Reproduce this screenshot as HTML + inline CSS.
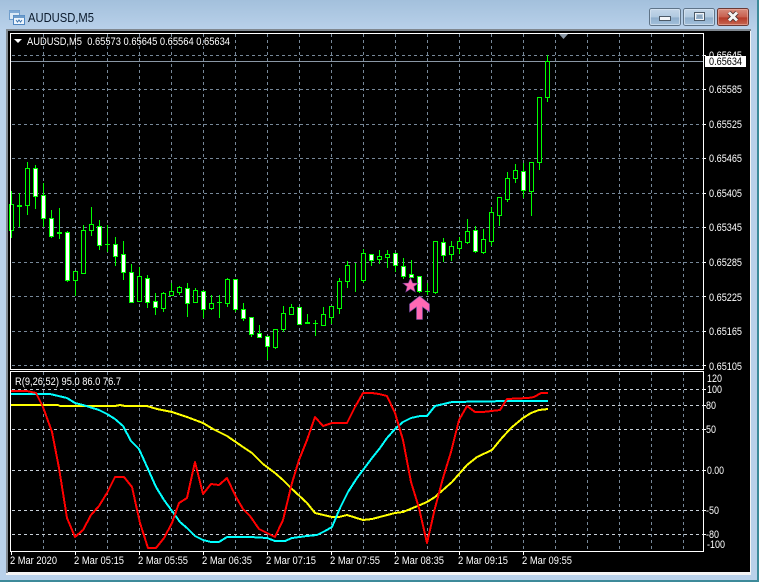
<!DOCTYPE html>
<html><head><meta charset="utf-8"><style>
html,body{margin:0;padding:0;background:#fff;width:761px;height:582px;overflow:hidden}
svg{display:block}
text{font-family:"Liberation Sans",sans-serif;font-size:11px;fill:#fff}
</style></head><body>
<svg width="761" height="582" viewBox="0 0 761 582" xmlns="http://www.w3.org/2000/svg">
<defs>
<linearGradient id="w" x1="0" y1="0" x2="0" y2="1"><stop offset="0" stop-color="#a3c0dc"/><stop offset="1" stop-color="#b9d1ea"/></linearGradient>
<linearGradient id="b" x1="0" y1="0" x2="0" y2="1"><stop offset="0" stop-color="#c5d8ea"/><stop offset=".5" stop-color="#b0c9e0"/><stop offset=".55" stop-color="#8fafcc"/><stop offset="1" stop-color="#a5c2dc"/></linearGradient>
<linearGradient id="c" x1="0" y1="0" x2="0" y2="1"><stop offset="0" stop-color="#d88f80"/><stop offset=".5" stop-color="#c8604f"/><stop offset=".55" stop-color="#b53a28"/><stop offset="1" stop-color="#c86a55"/></linearGradient>
</defs>
<!-- window -->
<rect x="0" y="0" width="759" height="582" fill="#b9d1ea"/>
<rect x="0" y="0" width="759" height="30" fill="url(#w)"/>
<rect x="757" y="0" width="2" height="582" fill="#3d8a9a"/>
<rect x="0" y="580" width="759" height="2" fill="#3d8a9a"/>
<rect x="6" y="29" width="745" height="546" fill="#f4f4f4"/>
<rect x="6" y="29" width="745" height="2" fill="#808890"/>
<rect x="6" y="29" width="2" height="544" fill="#808890"/>
<rect x="8" y="31" width="742" height="541" fill="#000"/>
<!-- icon -->
<rect x="9.5" y="10.5" width="10" height="9" fill="#dbe9f6" stroke="#6d9ccb"/>
<rect x="9.5" y="10.5" width="10" height="2.5" fill="#7fa9d4"/>
<rect x="13.5" y="15.5" width="11" height="9" fill="#eef5fc" stroke="#4f86c0"/>
<rect x="13.5" y="15.5" width="11" height="2.5" fill="#6d9ccb"/>
<path d="M16 20l1.5 2 1.5-2 1.5 2 1.5-2" fill="none" stroke="#3f76b0"/>
<text x="28" y="22" textLength="66" lengthAdjust="spacingAndGlyphs" style="font-size:13px;fill:#0b1a2c">AUDUSD,M5</text>
<!-- buttons -->
<rect x="649.5" y="8.5" width="31" height="17" rx="2" fill="url(#b)" stroke="#5f7488"/>
<rect x="650.5" y="9.5" width="29" height="15" rx="1" fill="none" stroke="#d8e6f2" stroke-opacity=".7"/>
<rect x="659.5" y="16.5" width="11" height="4" fill="#f2f5f8" stroke="#4c5a68"/>
<rect x="683.5" y="8.5" width="31" height="17" rx="2" fill="url(#b)" stroke="#5f7488"/>
<rect x="684.5" y="9.5" width="29" height="15" rx="1" fill="none" stroke="#d8e6f2" stroke-opacity=".7"/>
<rect x="694.5" y="12.5" width="10" height="8" fill="none" stroke="#4c5a68"/>
<rect x="695.5" y="13.5" width="8" height="6" fill="none" stroke="#f2f5f8"/>
<rect x="697" y="15" width="5" height="3" fill="#8fa7bd"/>
<rect x="717.5" y="8.5" width="31" height="17" rx="2" fill="url(#c)" stroke="#6a3a36"/>
<rect x="718.5" y="9.5" width="29" height="15" rx="1" fill="none" stroke="#eeb4a8" stroke-opacity=".6"/>
<path d="M729 12.5l8 8M737 12.5l-8 8" stroke="#4a3030" stroke-width="4.6"/>
<path d="M729 12.5l8 8M737 12.5l-8 8" stroke="#f4f4f4" stroke-width="3"/>
<!-- grid -->
<g stroke="#778899" fill="none" stroke-dasharray="3 3" shape-rendering="crispEdges">
<path d="M43.5 34V369M75.5 34V369M107.5 34V369M139.5 34V369M171.5 34V369M203.5 34V369M235.5 34V369M267.5 34V369M299.5 34V369M331.5 34V369M363.5 34V369M395.5 34V369M427.5 34V369M459.5 34V369M491.5 34V369M523.5 34V369M555.5 34V369M587.5 34V369M619.5 34V369M651.5 34V369M683.5 34V369"/>
<path d="M12 55.5H703M12 89.5H703M12 124.5H703M12 158.5H703M12 193.5H703M12 227.5H703M12 262.5H703M12 296.5H703M12 331.5H703M12 365.5H703"/>
<path d="M43.5 372V551M75.5 372V551M107.5 372V551M139.5 372V551M171.5 372V551M203.5 372V551M235.5 372V551M267.5 372V551M299.5 372V551M331.5 372V551M363.5 372V551M395.5 372V551M427.5 372V551M459.5 372V551M491.5 372V551M523.5 372V551M555.5 372V551M587.5 372V551M619.5 372V551M651.5 372V551M683.5 372V551"/>
</g>
<g stroke="#c8d0d8" fill="none" stroke-dasharray="3 3" shape-rendering="crispEdges">
<path d="M12 389.5H703M12 405.5H703M12 429.5H703M12 470.5H703M12 510.5H703M12 534.5H703"/>
</g>
<!-- price line -->
<path d="M11 61.5H703" stroke="#8a97a5" shape-rendering="crispEdges"/>
<!-- wicks -->
<path shape-rendering="crispEdges" fill="none" stroke="#0f0" d="M11.5 191V238M19.5 193V227M27.5 162V215M35.5 165V209M43.5 183V227M51.5 210V238M59.5 208V239M67.5 231V282M75.5 271V296M83.5 225V274M91.5 207V236M99.5 220V250M107.5 225V252M115.5 237V266M123.5 241V280M131.5 264V303M139.5 267V301M147.5 275V308M155.5 293V315M163.5 292V312M171.5 283V296M179.5 286V295M187.5 283V317M195.5 288V302M203.5 290V318M211.5 295V310M219.5 295V318M227.5 278V307M235.5 279V312M243.5 303V321M251.5 317V337M259.5 325V338M267.5 336V360M275.5 329V349M283.5 306V332M291.5 304V314M299.5 307V325M307.5 314V324M315.5 320V336M323.5 307V325M331.5 306V324M339.5 278V314M347.5 261V288M355.5 263V292M363.5 249V283M371.5 254V266M379.5 250V264M387.5 250V268M395.5 253V272M403.5 258V279M411.5 260V277M419.5 276V293M427.5 283V295M435.5 241V294M443.5 238V262M451.5 241V261M459.5 237V254M467.5 219V244M475.5 226V253M483.5 229V254M491.5 207V246M499.5 197V226M507.5 172V202M515.5 164V183M523.5 163V198M531.5 162V216M539.5 97V170M547.5 55V102"/>
<!-- doji -->
<path shape-rendering="crispEdges" fill="none" stroke="#0f0" stroke-width="2" d="M17 206h5M57 233h5M305 323h5"/>
<path shape-rendering="crispEdges" fill="none" stroke="#0f0" d="M217 302.5h5M425 291.5h5M105 244.5h5M313 323.5h5"/>
<!-- hollow bodies -->
<path shape-rendering="crispEdges" fill="#000" stroke="#0f0" d="M9.5 204.5h4V230.5h-4zM25.5 168.5h4V205.5h-4zM73.5 271.5h4V280.5h-4zM81.5 230.5h4V273.5h-4zM89.5 224.5h4V230.5h-4zM137.5 276.5h4V301.5h-4zM161.5 293.5h4V308.5h-4zM169.5 291.5h4V295.5h-4zM177.5 287.5h4V292.5h-4zM193.5 290.5h4V302.5h-4zM209.5 303.5h4V308.5h-4zM225.5 279.5h4V303.5h-4zM273.5 329.5h4V347.5h-4zM281.5 313.5h4V329.5h-4zM289.5 307.5h4V314.5h-4zM321.5 314.5h4V325.5h-4zM329.5 306.5h4V317.5h-4zM337.5 281.5h4V308.5h-4zM345.5 265.5h4V281.5h-4zM361.5 253.5h4V280.5h-4zM377.5 256.5h4V259.5h-4zM385.5 254.5h4V257.5h-4zM433.5 241.5h4V292.5h-4zM449.5 246.5h4V254.5h-4zM457.5 241.5h4V248.5h-4zM465.5 231.5h4V242.5h-4zM481.5 239.5h4V252.5h-4zM489.5 212.5h4V241.5h-4zM497.5 197.5h4V215.5h-4zM505.5 178.5h4V199.5h-4zM513.5 170.5h4V178.5h-4zM529.5 162.5h4V191.5h-4zM537.5 97.5h4V162.5h-4zM545.5 61.5h4V97.5h-4z"/>
<!-- filled bodies -->
<path shape-rendering="crispEdges" fill="#fff" stroke="#0f0" d="M33.5 168.5h4V196.5h-4zM41.5 195.5h4V218.5h-4zM49.5 218.5h4V236.5h-4zM65.5 232.5h4V280.5h-4zM97.5 226.5h4V245.5h-4zM113.5 244.5h4V256.5h-4zM121.5 254.5h4V272.5h-4zM129.5 272.5h4V302.5h-4zM145.5 278.5h4V302.5h-4zM153.5 301.5h4V307.5h-4zM185.5 288.5h4V303.5h-4zM201.5 291.5h4V309.5h-4zM233.5 279.5h4V309.5h-4zM241.5 309.5h4V318.5h-4zM249.5 317.5h4V334.5h-4zM257.5 333.5h4V337.5h-4zM265.5 336.5h4V346.5h-4zM297.5 307.5h4V324.5h-4zM369.5 254.5h4V260.5h-4zM393.5 253.5h4V265.5h-4zM401.5 266.5h4V276.5h-4zM409.5 274.5h4V277.5h-4zM417.5 276.5h4V291.5h-4zM441.5 242.5h4V255.5h-4zM473.5 230.5h4V251.5h-4zM521.5 171.5h4V190.5h-4z"/>
<!-- star + arrow -->
<polygon points="410.5,278 412.6,283 418,283.3 413.8,286.6 415.2,292 410.5,289 405.8,292 407.2,286.6 403,283.3 408.4,283" fill="#ff69b4" stroke="#7a3f9a" stroke-width=".6"/>
<polygon points="419.5,296 429.5,304 429.5,312 422.5,307 422.5,319.5 416.5,319.5 416.5,307 409.5,312 409.5,304" fill="#ff69b4" stroke="#6a4aa0" stroke-width=".6"/>
<!-- indicators -->
<g fill="none" stroke-width="2" shape-rendering="crispEdges" stroke-linejoin="round">
<polyline stroke="#ff0" points="11,405 58,405 60,406 115,406 120,405 125,406 147,406 157,409 172,412 187,417 203,423 213,429 227,436 243,447 252,453 263,464 275,473 283,480 292,489 307,503 315,513 332,517 339,517 347,515 363,520 372,519 395,513 403,512 420,505 427,502 435,497 452,482 467,465 477,457 492,450 501,439 511,428 523,418 531,413 539,410 548,409"/>
<polyline stroke="#0ff" points="11,394 50,394 67,398 75,403 83,405 99,410 107,414 115,419 123,426 131,441 139,449 148,469 156,487 164,500 172,511 180,522 187,528 195,536 203,540 211,542 219,542 227,537 250,537 267,538 275,541 285,541 292,538 307,536 317,535 325,531 332,527 340,508 348,492 357,478 363,470 372,458 380,448 387,438 395,429 403,422 411,418 420,416 427,416 435,406 452,402 510,401 548,401"/>
<polyline stroke="#f00" points="11,391 27,391 36,393 43,407 52,432 59,468 67,518 75,537 83,530 91,515 99,506 107,493 115,477 124,477 132,487 140,523 148,548 156,548 164,538 172,523 179,503 187,498 195,462 203,494 211,484 219,485 227,478 236,497 243,509 250,516 259,529 267,533 275,537 283,520 292,483 299,460 307,440 315,417 323,426 332,423 347,423 355,407 363,393 372,393 379,394 387,396 395,413 403,440 411,482 419,508 427,543 435,508 443,478 451,452 459,420 467,406 475,412 483,412 500,410 507,399 528,398 534,397 541,393 548,393"/>
</g>
<!-- frame -->
<g fill="none" stroke="#fff" shape-rendering="crispEdges">
<path d="M10.5 33.5H703.5V369.5H10.5Z"/>
<path d="M10.5 371.5H703.5V551.5H10.5Z"/>
<path d="M703 55.5h3M703 89.5h3M703 124.5h3M703 158.5h3M703 193.5h3M703 227.5h3M703 262.5h3M703 296.5h3M703 331.5h3M703 365.5h3"/>
<path d="M703 389.5h3M703 405.5h3M703 429.5h3M703 470.5h3M703 510.5h3M703 534.5h3"/>
<path d="M11.5 552v3M75.5 552v3M139.5 552v3M203.5 552v3M267.5 552v3M331.5 552v3M395.5 552v3M459.5 552v3M523.5 552v3"/>
</g>
<polygon points="559,34 568,34 563.5,39" fill="#8a97a5"/>
<polygon points="14,39 22,39 18,43" fill="#fff"/>
<!-- labels -->
<text x="27" y="45" textLength="203" lengthAdjust="spacingAndGlyphs" xml:space="preserve">AUDUSD,M5  0.65573 0.65645 0.65564 0.65634</text>
<text x="15" y="385" textLength="106" lengthAdjust="spacingAndGlyphs">R(9,26,52) 95.0 86.0 76.7</text>
<g>
<text x="709" y="59" textLength="33" lengthAdjust="spacingAndGlyphs">0.65645</text>
<text x="709" y="93" textLength="33" lengthAdjust="spacingAndGlyphs">0.65585</text>
<text x="709" y="128" textLength="33" lengthAdjust="spacingAndGlyphs">0.65525</text>
<text x="709" y="162" textLength="33" lengthAdjust="spacingAndGlyphs">0.65465</text>
<text x="709" y="197" textLength="33" lengthAdjust="spacingAndGlyphs">0.65405</text>
<text x="709" y="231" textLength="33" lengthAdjust="spacingAndGlyphs">0.65345</text>
<text x="709" y="266" textLength="33" lengthAdjust="spacingAndGlyphs">0.65285</text>
<text x="709" y="301" textLength="33" lengthAdjust="spacingAndGlyphs">0.65225</text>
<text x="709" y="335" textLength="33" lengthAdjust="spacingAndGlyphs">0.65165</text>
<text x="709" y="370" textLength="33" lengthAdjust="spacingAndGlyphs">0.65105</text>
</g>
<rect x="705" y="56" width="41" height="11" fill="#fff"/>
<text x="709" y="65" textLength="33" lengthAdjust="spacingAndGlyphs" style="fill:#000">0.65634</text>
<text x="707" y="382" textLength="15" lengthAdjust="spacingAndGlyphs">120</text>
<text x="707" y="393" textLength="15" lengthAdjust="spacingAndGlyphs">100</text>
<text x="706" y="409" textLength="10" lengthAdjust="spacingAndGlyphs">80</text>
<text x="706" y="433" textLength="10" lengthAdjust="spacingAndGlyphs">50</text>
<text x="707" y="474" textLength="17" lengthAdjust="spacingAndGlyphs">0.00</text>
<text x="706" y="514" textLength="13" lengthAdjust="spacingAndGlyphs">-50</text>
<text x="706" y="538" textLength="13" lengthAdjust="spacingAndGlyphs">-80</text>
<text x="707" y="548" textLength="18" lengthAdjust="spacingAndGlyphs">-100</text>
<g>
<text x="10" y="564" textLength="47" lengthAdjust="spacingAndGlyphs">2 Mar 2020</text>
<text x="74" y="564" textLength="50" lengthAdjust="spacingAndGlyphs">2 Mar 05:15</text>
<text x="138" y="564" textLength="50" lengthAdjust="spacingAndGlyphs">2 Mar 05:55</text>
<text x="202" y="564" textLength="50" lengthAdjust="spacingAndGlyphs">2 Mar 06:35</text>
<text x="266" y="564" textLength="50" lengthAdjust="spacingAndGlyphs">2 Mar 07:15</text>
<text x="330" y="564" textLength="50" lengthAdjust="spacingAndGlyphs">2 Mar 07:55</text>
<text x="394" y="564" textLength="50" lengthAdjust="spacingAndGlyphs">2 Mar 08:35</text>
<text x="458" y="564" textLength="50" lengthAdjust="spacingAndGlyphs">2 Mar 09:15</text>
<text x="522" y="564" textLength="50" lengthAdjust="spacingAndGlyphs">2 Mar 09:55</text>
</g>
</svg>
</body></html>
